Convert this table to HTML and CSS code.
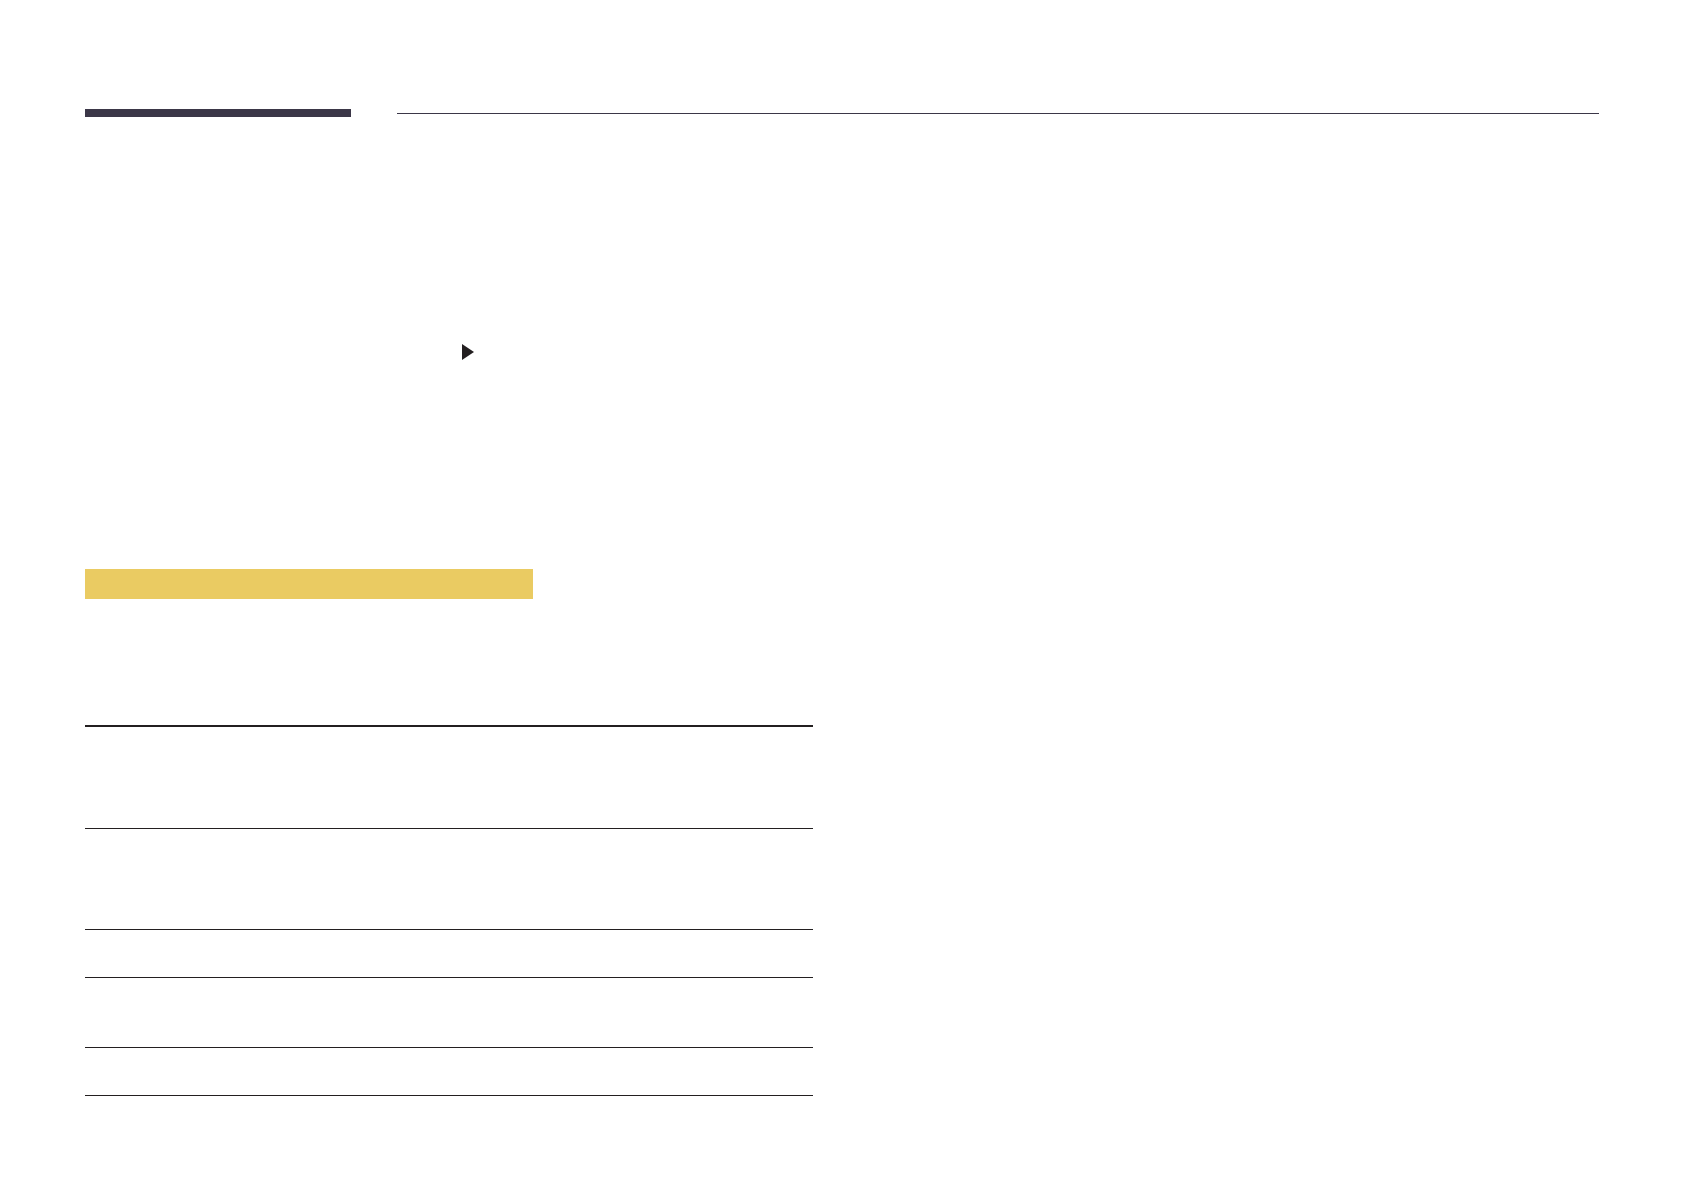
FILE: index.html
```html
<!DOCTYPE html>
<html lang="en">
<head>
<meta charset="utf-8">
<title>Page</title>
<link rel="stylesheet" href="styles.css">
</head>
<body>
<div class="page">
  <header class="head">
    <div class="head-bar"></div>
    <div class="head-rule"></div>
  </header>
  <div class="step">
    <svg class="step-arrow" width="12" height="16" viewBox="0 0 12 16"><polygon points="0,0 12,8 0,16" fill="#231f20"/></svg>
  </div>
  <div class="note-bar"></div>
  <div class="table">
    <div class="row row-first"></div>
    <div class="row row-tall"></div>
    <div class="row row-short"></div>
    <div class="row row-mid"></div>
    <div class="row row-last"></div>
  </div>
</div>
</body>
</html>
```

FILE: styles.css
```css
html, body {
  margin: 0;
  padding: 0;
  background: #ffffff;
  font-family: "Liberation Sans", Arial, sans-serif;
}

.page {
  padding: 0 86px 0 85px;
  display: flex;
  flex-direction: column;
}

.head {
  margin-top: 109px;
  display: flex;
  align-items: center;
  gap: 46px;
  height: 8px;
}

.head-bar {
  width: 266px;
  height: 8px;
  background: #3b3748;
  flex: none;
}

.head-rule {
  flex: 1;
  height: 1px;
  background: #3b3748;
}

.step {
  margin-top: 227px;
  padding-left: 377px;
  height: 16px;
}

.step-arrow {
  display: block;
}

.note-bar {
  margin-top: 209px;
  width: 448px;
  height: 30px;
  background: #eacb62;
}

.table {
  margin-top: 126px;
  width: 728px;
  border-top: 2px solid #231f20;
}

.row {
  border-bottom: 1px solid #231f20;
}

.row-first { height: 101px; }
.row-tall { height: 100px; }
.row-short { height: 47px; }
.row-mid { height: 69px; }
.row-last { height: 47px; }
```
